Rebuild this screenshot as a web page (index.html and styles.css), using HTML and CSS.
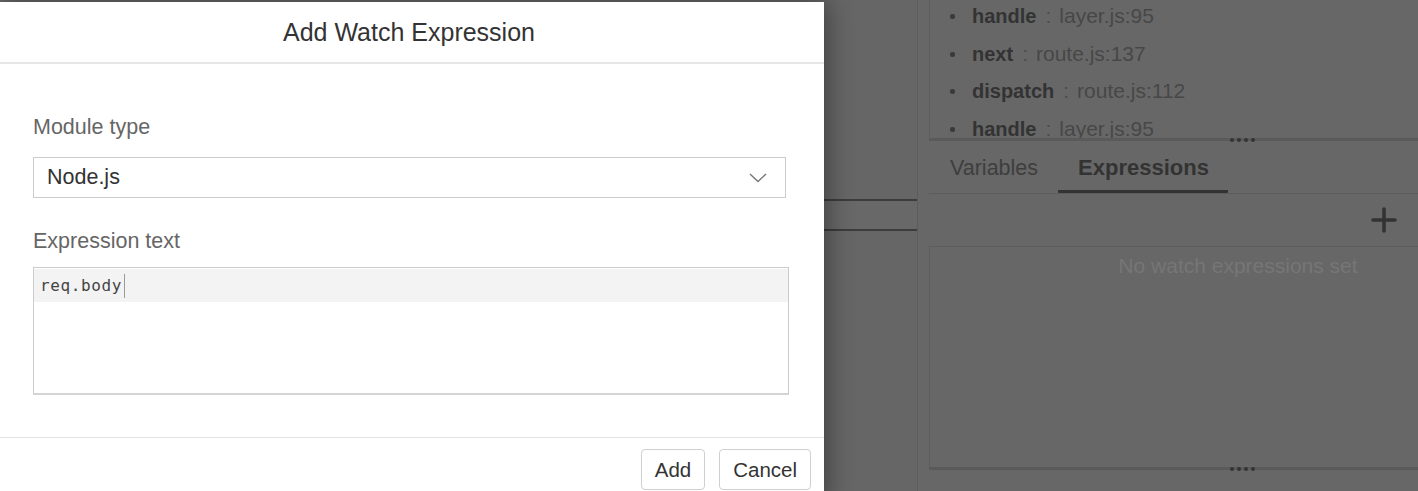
FILE: index.html
```html
<!DOCTYPE html>
<html lang="en">
<head>
<meta charset="utf-8">
<title>Add Watch Expression</title>
<link rel="stylesheet" href="styles.css">
</head>
<body>
<div class="app">
  <div class="editor-area">
    <div class="editor-strip"></div>
  </div>
  <div class="side">
    <div class="callstack">
      <ul class="frames">
        <li><b>handle</b><span class="sep">:</span><span class="loc">layer.js:95</span></li>
        <li><b>next</b><span class="sep">:</span><span class="loc">route.js:137</span></li>
        <li><b>dispatch</b><span class="sep">:</span><span class="loc">route.js:112</span></li>
        <li><b>handle</b><span class="sep">:</span><span class="loc">layer.js:95</span></li>
      </ul>
    </div>
    <div class="splitter"><span class="grip"><i></i><i></i><i></i><i></i></span></div>
    <div class="tabs">
      <span class="tab">Variables</span>
      <span class="tab active">Expressions</span>
    </div>
    <div class="tool-row">
      <svg class="plus" width="26" height="26" viewBox="0 0 26 26"><path d="M13 2V24M2 13H24" stroke="#333" stroke-width="3.6" stroke-linecap="round"/></svg>
    </div>
    <div class="watch-box">
      <div class="empty">No watch expressions set</div>
    </div>
    <div class="splitter"><span class="grip"><i></i><i></i><i></i><i></i></span></div>
  </div>
</div>

<div class="dialog">
  <div class="dialog-header">Add Watch Expression</div>
  <div class="dialog-body">
    <div class="field-label">Module type</div>
    <div class="select">
      <span>Node.js</span>
      <svg width="18" height="10" viewBox="0 0 18 10"><path d="M1 1L9 8.5L17 1" fill="none" stroke="#777" stroke-width="1.4"/></svg>
    </div>
    <div class="field-label second">Expression text</div>
    <div class="code-area">
      <div class="code-line">req.body<span class="caret"></span></div>
    </div>
  </div>
  <div class="dialog-footer">
    <button class="btn">Add</button>
    <button class="btn">Cancel</button>
  </div>
</div>
</body>
</html>
```
FILE: styles.css
```css
* { box-sizing: border-box; }
html, body {
  margin: 0;
  padding: 0;
  width: 1418px;
  height: 491px;
  overflow: hidden;
  background: #666666;
  font-family: "Liberation Sans", Arial, sans-serif;
}
.app {
  display: grid;
  grid-template-columns: 917px 1fr;
  height: 491px;
}
.editor-area {
  background: #666666;
  padding-top: 199px;
}
.editor-strip {
  height: 32px;
  margin-left: 824px;
  border-top: 2px solid #3c3c3c;
  border-bottom: 2px solid #3c3c3c;
  background: #686868;
}
.side {
  border-left: 1px solid #5c5c5c;
  padding-left: 11px;
  display: flex;
  flex-direction: column;
  background: #676767;
}
.callstack {
  height: 138px;
  overflow: hidden;
  border-left: 1px solid #5e5e5e;
}
.frames {
  list-style: none;
  margin: -3px 0 0 0;
  padding: 0 0 0 42px;
}
.frames li {
  position: relative;
  height: 37.5px;
  line-height: 37.5px;
  font-size: 21px;
  color: #474747;
  white-space: nowrap;
}
.frames li::before {
  content: "";
  position: absolute;
  left: -22px;
  top: 17px;
  width: 5px;
  height: 5px;
  border-radius: 2px;
  background: #3a3a3a;
}
.frames b {
  font-size: 20px;
  color: #333333;
}
.sep { margin: 0 8px 0 9px; color: #4d4d4d; }
.splitter {
  height: 3px;
  background: #5a5a5a;
  display: flex;
  justify-content: center;
  align-items: center;
  padding-left: 138px;
}
.grip { display: flex; gap: 3px; }
.grip i {
  display: block;
  width: 4px;
  height: 4px;
  border-radius: 50%;
  background: #333;
}
.tabs {
  height: 53px;
  display: flex;
  align-items: flex-end;
  border-bottom: 1px solid #5c5c5c;
  padding-left: 21px;
  gap: 38px;
}
.tab {
  font-size: 21.5px;
  color: #3e3e3e;
  height: 52px;
  line-height: 54px;
}
.tab.active {
  font-size: 22px;
  font-weight: bold;
  color: #333;
  border-bottom: 3px solid #333;
  padding: 0 19px 0 20px;
  margin-left: -18px;
  border-radius: 1px;
}
.tool-row {
  height: 52px;
  display: flex;
  justify-content: flex-end;
  align-items: center;
  padding-right: 21px;
}
.watch-box {
  flex: 0 0 221px;
  border-top: 1px solid #5c5c5c;
  border-left: 1px solid #5e5e5e;
}
.empty {
  padding-left: 128px;
  text-align: center;
  font-size: 21px;
  color: #767676;
  line-height: 38px;
}

/* dialog */
.dialog {
  position: absolute;
  left: 0;
  top: 2px;
  width: 824px;
  height: 500px;
  background: #ffffff;
  box-shadow: 3px 0 24px rgba(0, 0, 0, 0.4);
}
.dialog-header {
  height: 62px;
  border-bottom: 2px solid #e6e6e6;
  text-align: center;
  font-size: 25px;
  line-height: 60px;
  color: #333333;
  padding-right: 6px;
}
.dialog-body {
  padding: 50px 35px 0 33px;
  height: 373px;
}
.field-label {
  font-size: 21.5px;
  line-height: 26px;
  color: #666666;
}
.field-label.second { margin-top: 30px; }
.select {
  margin-top: 17px;
  width: 753px;
  height: 41px;
  border: 1px solid #cccccc;
  display: flex;
  align-items: center;
  justify-content: space-between;
  padding: 0 18px 0 13px;
  font-size: 21.5px;
  color: #333333;
}
.code-area {
  margin-top: 13px;
  height: 128px;
  border: 1px solid #cccccc;
  border-bottom: 2px solid #d4d4d4;
  padding-top: 1px;
}
.code-line {
  background: #f3f3f3;
  height: 33px;
  line-height: 33px;
  padding-left: 6px;
  font-family: "DejaVu Sans Mono", "Liberation Mono", monospace;
  font-size: 16px;
  letter-spacing: 0.6px;
  color: #444444;
  display: flex;
  align-items: center;
}
.caret {
  display: inline-block;
  width: 1px;
  height: 24px;
  background: #9a9a9a;
  margin-left: 2px;
}
.dialog-footer {
  border-top: 1px solid #e3e3e3;
  display: flex;
  justify-content: flex-end;
  gap: 14px;
  padding: 11px 13px 0 0;
}
.btn {
  font-family: "Liberation Sans", Arial, sans-serif;
  font-size: 20.5px;
  color: #333333;
  background: #ffffff;
  border: 1px solid #cfcfcf;
  border-radius: 4px;
  height: 41px;
  padding: 0 13px;
}
.btn + .btn { padding: 0 13px; }
```
